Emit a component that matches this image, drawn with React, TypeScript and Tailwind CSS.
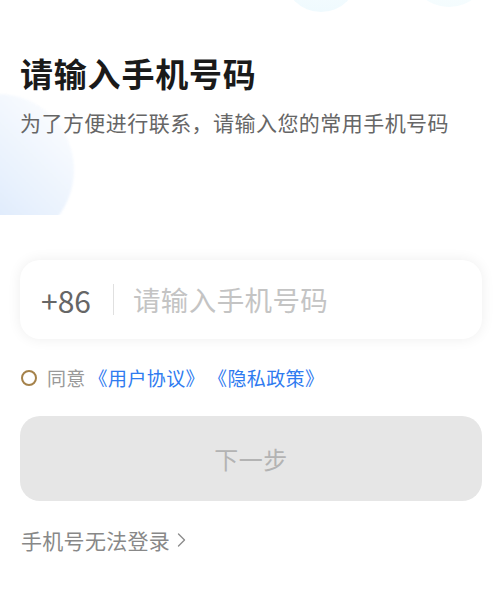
import React from "react";

export default function App() {
  return (
    <div
      className="relative w-full h-[593px] overflow-hidden bg-white"
      style={{ fontFamily: '"Noto Sans CJK SC", "Noto Sans", sans-serif' }}
    >
      {/* decorative blobs */}
      <div className="absolute left-0 top-0 w-[120px] h-[215px] overflow-hidden pointer-events-none">
        <div className="absolute left-[-78px] top-[94px] w-[152px] h-[152px] rounded-full bg-gradient-to-tr from-[#cddffb] via-[#e8f1fd] to-white blur-[1px]" />
      </div>
      <div className="absolute left-[284px] top-[-62px] w-[74px] h-[74px] rounded-full bg-gradient-to-b from-white to-[#effafe] pointer-events-none" />
      <div className="absolute left-[410px] top-[-70px] w-[78px] h-[77px] rounded-full bg-gradient-to-b from-white to-[#f4fcfe] pointer-events-none" />

      <div className="relative px-5 flex flex-col">
        <h1 className="mt-[53px] text-[33px] leading-[40px] font-bold text-[#1a1a1a] tracking-[0.8px]">
          请输入手机号码
        </h1>
        <p className="mt-[15px] text-[21px] leading-[28px] text-[#666666] tracking-[0.45px]">
          为了方便进行联系，请输入您的常用手机号码
        </p>

        <div className="mt-[124px] h-[79px] rounded-[20px] bg-white shadow-[0_0_14px_rgba(0,0,0,0.07)] flex items-center pl-[21px]">
          <span className="text-[30px] text-[#666666] leading-none">+86</span>
          <div className="ml-[22px] w-px h-[31px] bg-[#e0e0e0]" />
          <span className="ml-[19px] text-[27.5px] text-[#c4c4c4] leading-none tracking-[0.4px]">
            请输入手机号码
          </span>
        </div>

        <div className="mt-[26px] h-[26px] flex items-center [text-spacing-trim:space-all]">
          <div className="ml-px w-[16px] h-[16px] rounded-full border-2 border-[#a5824a]" />
          <span className="ml-[10px] text-[19px] leading-[26px] text-[#999999] tracking-[0.3px]">同意</span>
          <span className="ml-[3px] text-[19px] leading-[26px] text-[#2f7bf0] tracking-[0.4px]">《用户协议》</span>
          <span className="ml-[3px] text-[19px] leading-[26px] text-[#2f7bf0] tracking-[0.4px]">《隐私政策》</span>
        </div>

        <div className="mt-[25px] h-[85px] rounded-[20px] bg-[#e6e6e6] flex items-center justify-center">
          <span className="text-[24px] text-[#b3b3b3] tracking-[0.5px]">下一步</span>
        </div>

        <div className="mt-[25px] h-[28px] flex items-center">
          <span className="ml-px text-[21px] leading-[28px] text-[#888888] tracking-[0.3px]">手机号无法登录</span>
          <svg className="ml-[7px]" width="9" height="16" viewBox="0 0 9 16" fill="none">
            <path d="M1.5 2 L7.5 8 L1.5 14" stroke="#8c8c8c" strokeWidth="1.4" strokeLinecap="round" strokeLinejoin="round" />
          </svg>
        </div>
      </div>
    </div>
  );
}
